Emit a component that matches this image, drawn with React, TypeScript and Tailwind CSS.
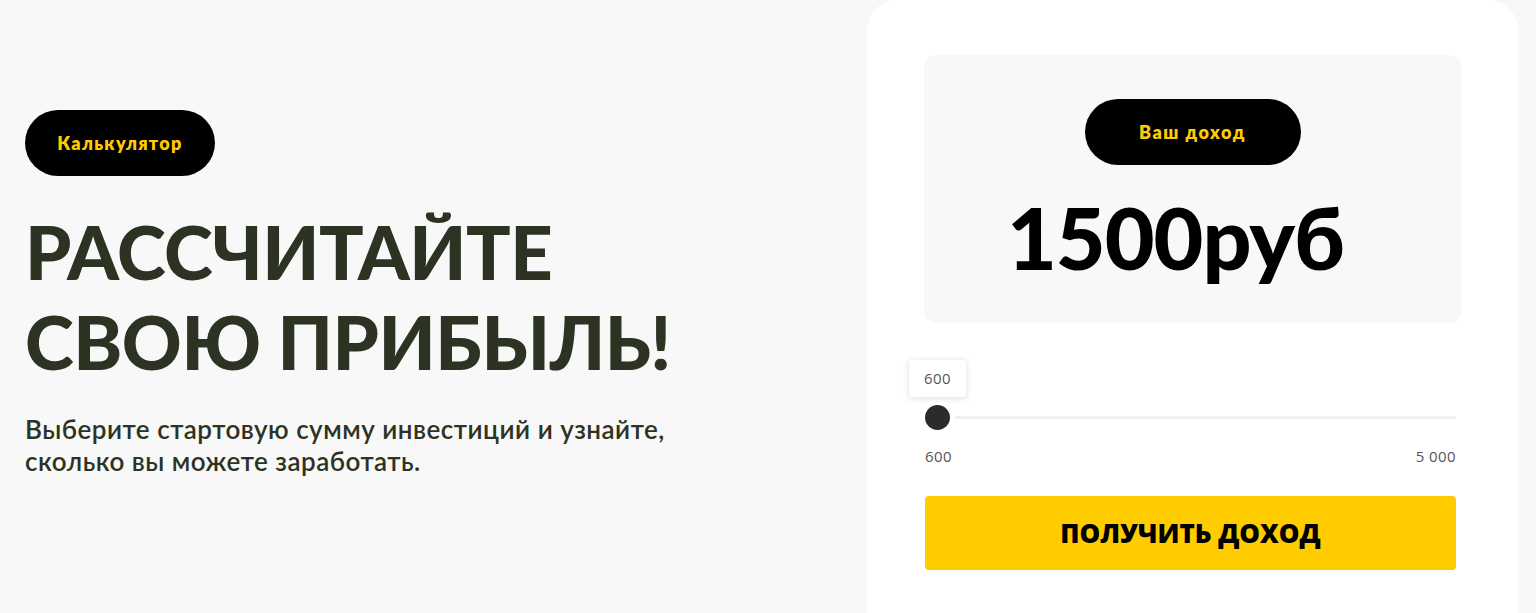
import React from "react";

const futura = { fontFamily: "Lato, 'Noto Sans', sans-serif" };

export default function App() {
  return (
    <div className="w-[1536px] h-[613px] overflow-hidden bg-[#f8f8f8] flex" style={futura}>
      <div className="w-[867px] shrink-0 pl-[25px] pt-[110px] flex flex-col items-start">
        <div className="h-[66px] w-[190px] rounded-full bg-black flex items-center justify-center text-[#ffcc00] text-[18px] tracking-[1.3px] font-extrabold">
          Калькулятор
        </div>
        <h1 className="mt-[31px] text-[#2d3323] text-[74px] leading-[90px] font-black tracking-[-0.5px]">
          РАССЧИТАЙТЕ
          <br />
          СВОЮ ПРИБЫЛЬ!
        </h1>
        <p className="mt-[26px] text-[#2d3323] text-[26px] leading-[32px] font-semibold tracking-[0.5px]">
          Выберите стартовую сумму инвестиций и узнайте,
          <br />
          сколько вы можете заработать.
        </p>
      </div>
      <div className="w-[651px] shrink-0 h-[700px] bg-white rounded-[30px] px-[57px] pt-[55px]">
        <div className="h-[268px] rounded-[12px] bg-[#f8f8f8] flex flex-col items-center pt-[44px]">
          <div className="h-[66px] w-[216px] rounded-full bg-black flex items-center justify-center text-[#ffcc00] text-[18px] tracking-[1.5px] font-extrabold">
            Ваш доход
          </div>
          <div className="mt-[24px] mr-[34px] text-black text-[86px] leading-[96px] font-black tracking-[-1px]">1500руб</div>
        </div>
        <div className="mr-[5px] ml-[1px] pt-[37px]" style={{ fontFamily: "'Open Sans', sans-serif" }}>
          <div className="relative h-[52px]">
            <div className="absolute left-[-16px] top-0 h-[37px] w-[57px] bg-white rounded-[3px] shadow-[0_1px_6px_rgba(0,0,0,0.15)] flex items-center justify-center text-[15px] tracking-[0.4px] text-[#555]">
              600
            </div>
            <div className="absolute left-[30px] right-0 top-[56px] h-[3px] bg-[#efefef] rounded-full" />
            <div className="absolute left-0 top-[45px] h-[25px] w-[25px] rounded-full bg-[#2b2b2b]" />
          </div>
          <div className="mt-[34px] flex justify-between text-[15px] leading-[20px] tracking-[0.4px] text-[#555]">
            <span>600</span>
            <span>5 000</span>
          </div>
          <button className="mt-[30px] w-full h-[74px] bg-[#ffcc00] rounded-[4px] text-black text-[26px] font-black">
            ПОЛУЧИТЬ ДОХОД
          </button>
        </div>
      </div>
    </div>
  );
}
